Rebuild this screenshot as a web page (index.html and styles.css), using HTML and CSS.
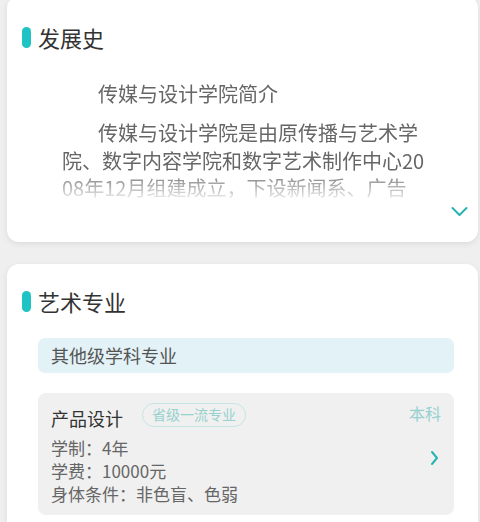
FILE: index.html
```html
<!DOCTYPE html>
<html lang="zh">
<head>
<meta charset="utf-8">
<title>发展史</title>
<link rel="stylesheet" href="styles.css">
</head>
<body>
<div class="page">
  <section class="card card-history">
    <h2 class="card-title"><span class="bar"></span>发展史</h2>
    <div class="intro">
      <p class="intro-head">传媒与设计学院简介</p>
      <p class="intro-body">传媒与设计学院是由原传播与艺术学院、数字内容学院和数字艺术制作中心2008年12月组建成立，下设新闻系、广告系、艺术设计系等教学单位。</p>
    </div>
    <div class="more">
      <svg width="17" height="11" viewBox="0 0 17 11"><path d="M1.5 2 L8.5 9 L15.5 2" fill="none" stroke="#27b3b3" stroke-width="2" stroke-linecap="round" stroke-linejoin="round"/></svg>
    </div>
  </section>

  <section class="card card-major">
    <h2 class="card-title"><span class="bar"></span>艺术专业</h2>
    <div class="group">其他级学科专业</div>
    <div class="major">
      <div class="major-main">
        <div class="major-head">
          <span class="major-name">产品设计</span>
          <span class="badge">省级一流专业</span>
        </div>
        <div class="major-info">学制：4年</div>
        <div class="major-info">学费：10000元</div>
        <div class="major-info">身体条件：非色盲、色弱</div>
      </div>
      <div class="major-side">
        <span class="level">本科</span>
        <svg class="arrow" width="9" height="16" viewBox="0 0 9 16"><path d="M2 2 L7 8 L2 14" fill="none" stroke="#27b3b3" stroke-width="2" stroke-linecap="round" stroke-linejoin="round"/></svg>
      </div>
    </div>
  </section>
</div>
</body>
</html>
```

FILE: styles.css
```css
* { box-sizing: border-box; }
html, body {
  margin: 0;
  padding: 0;
  background: #efefef;
  font-family: "Noto Sans CJK SC", "Noto Sans", sans-serif;
  overflow: hidden;
}
.page {
  display: flex;
  flex-direction: column;
  gap: 22px;
  padding-left: 7px;
  margin-top: -4px;
}
.card {
  width: 471px;
  background: #fff;
  border-radius: 12px;
  box-shadow: 0 2px 6px rgba(0, 0, 0, 0.08);
}
.card-history {
  padding: 26px 15px 25px 15px;
}
.card-major {
  padding: 22px 24px 20px 15px;
}
.card-title {
  display: flex;
  align-items: center;
  gap: 7px;
  margin: 0;
  font-size: 22px;
  line-height: 30px;
  font-weight: 400;
  color: #333;
}
.bar {
  width: 9px;
  height: 21px;
  border-radius: 5px;
  background: #1ec3c3;
}
.intro {
  margin: 28px 0 0 40px;
  width: 372px;
  height: 118px;
  overflow: hidden;
  color: #666;
  font-size: 20px;
  word-break: break-all;
  -webkit-mask-image: linear-gradient(to bottom, #000 76%, rgba(0,0,0,0.15) 100%);
  mask-image: linear-gradient(to bottom, #000 76%, rgba(0,0,0,0.15) 100%);
}
.intro p {
  margin: 0;
  text-indent: 36px;
}
.intro-head {
  line-height: 28px;
}
.intro-body {
  margin-top: 11px !important;
  line-height: 27.5px;
}
.more {
  display: flex;
  justify-content: flex-end;
  margin-right: -5px;
  margin-top: 8px;
  height: 11px;
}
.more svg { display: block; }
.group {
  margin: 22px 0 0 16px;
  height: 35px;
  padding-left: 13px;
  border-radius: 7px;
  background: #e3f2f6;
  color: #555;
  font-size: 18px;
  line-height: 35px;
}
.major {
  margin: 20px 0 0 16px;
  display: flex;
  justify-content: space-between;
  padding: 12px 13px 10px 13px;
  border-radius: 8px;
  background: #f0f0f0;
}
.major-head {
  display: flex;
  align-items: center;
  gap: 19px;
  height: 26px;
}
.major-name {
  font-size: 18px;
  color: #333;
  line-height: 26px;
}
.badge {
  height: 24px;
  padding: 0 9px;
  border: 1.5px solid #c5e5e3;
  border-radius: 12px;
  color: #97d1ce;
  font-size: 14px;
  line-height: 21px;
  margin-top: -6px;
}
.major-info {
  font-size: 17px;
  line-height: 23px;
  color: #666;
}
.major-head + .major-info { margin-top: 5px; }
.major-side {
  display: flex;
  flex-direction: column;
  align-items: flex-end;
}
.level {
  font-size: 16px;
  line-height: 22px;
  color: #96d0cf;
  margin-top: -3px;
}
.arrow {
  display: block;
  margin-top: 26px;
  margin-right: 2px;
}
```
